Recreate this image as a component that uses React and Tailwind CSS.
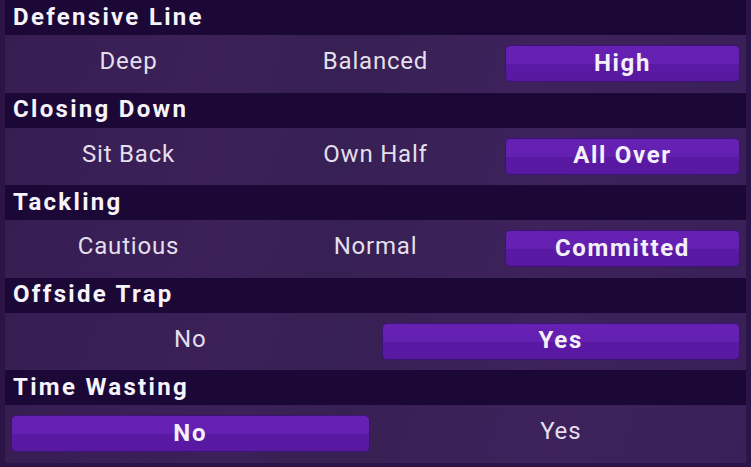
const sections = [
  { title: 'Defensive Line', options: ['Deep', 'Balanced', 'High'], selected: 2 },
  { title: 'Closing Down', options: ['Sit Back', 'Own Half', 'All Over'], selected: 2 },
  { title: 'Tackling', options: ['Cautious', 'Normal', 'Committed'], selected: 2 },
  { title: 'Offside Trap', options: ['No', 'Yes'], selected: 1 },
  { title: 'Time Wasting', options: ['No', 'Yes'], selected: 0 },
];

const Option = ({ label, active }) => (
  <div className="flex-1 flex items-center justify-center px-[6px]">
    {active ? (
      <div className="w-full h-[37px] flex items-center justify-center pb-[2px] rounded-[5px] border border-[#3e1178] bg-[linear-gradient(180deg,#6621b3_0%,#6420b0_50%,#5a19a3_52%,#5818a0_100%)] text-[24px] leading-none font-bold tracking-[1.7px] text-[#f4f0fa]">
        {label}
      </div>
    ) : (
      <span className="pb-[5px] text-[24px] leading-none tracking-[0.8px] text-[#e4dfec]">{label}</span>
    )}
  </div>
);

export default function App() {
  return (
    <div
      className="w-[751px] h-[467px] overflow-hidden bg-[#2c1447] px-[5px]"
      style={{ fontFamily: 'Roboto, "Noto Sans", sans-serif' }}
    >
      {sections.map((s) => (
        <div key={s.title}>
          <div className="h-[35px] flex items-center pl-[8px] pb-[2px] bg-[#1c0836]">
            <span className="text-[24px] font-bold tracking-[2.3px] text-[#f6f3fa] leading-none">{s.title}</span>
          </div>
          <div className="h-[57.5px] flex bg-[linear-gradient(110deg,#361d52_0%,#3b2158_30%,#372053_45%,#3d225b_70%,#3a2058_100%)]">
            {s.options.map((o, i) => (
              <Option key={o} label={o} active={i === s.selected} />
            ))}
          </div>
        </div>
      ))}
    </div>
  );
}
